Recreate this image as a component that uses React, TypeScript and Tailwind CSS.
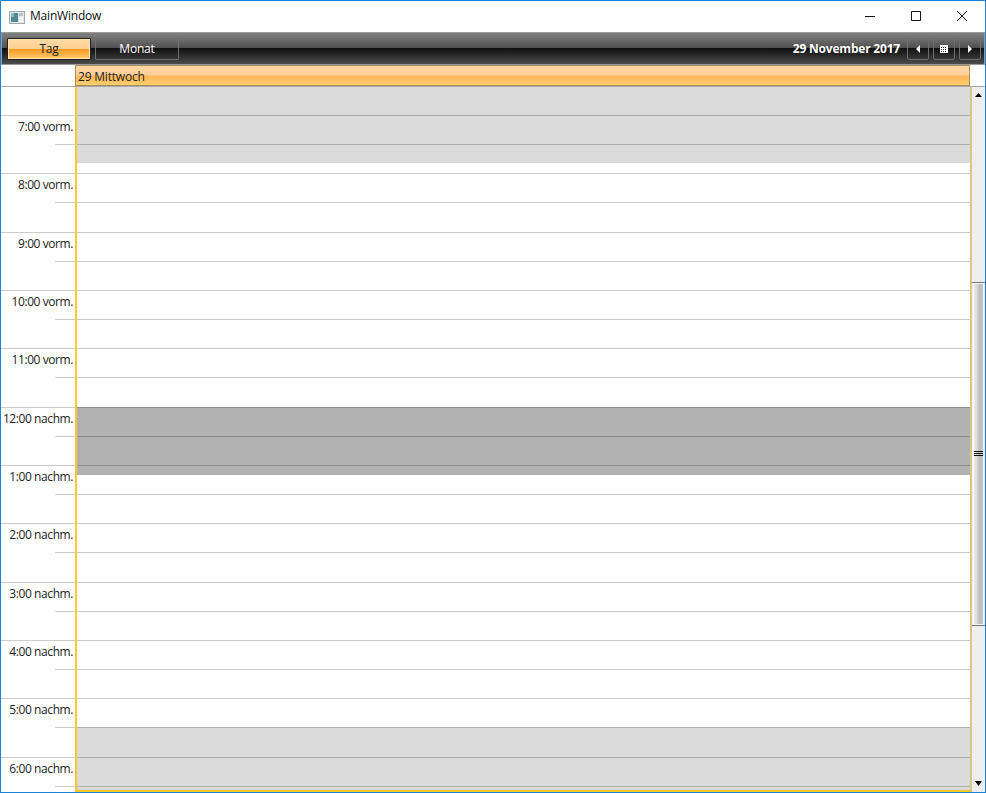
const hours = [
  "7:00 vorm.",
  "8:00 vorm.",
  "9:00 vorm.",
  "10:00 vorm.",
  "11:00 vorm.",
  "12:00 nachm.",
  "1:00 nachm.",
  "2:00 nachm.",
  "3:00 nachm.",
  "4:00 nachm.",
  "5:00 nachm.",
  "6:00 nachm.",
];

function WindowButtons() {
  return (
    <div className="flex h-full items-start">
      <div className="flex h-[30px] w-[46px] items-center justify-center">
        <svg width="10" height="10" viewBox="0 0 10 10"><path d="M0 5.5H10" stroke="#111" /></svg>
      </div>
      <div className="flex h-[30px] w-[46px] items-center justify-center">
        <svg width="10" height="10" viewBox="0 0 10 10"><path d="M.5.5h9v9h-9z" fill="none" stroke="#111" /></svg>
      </div>
      <div className="flex h-[30px] w-[46px] items-center justify-center">
        <svg width="12" height="12" viewBox="0 0 12 12"><path d="M1 1l10 10M11 1L1 11" stroke="#111" /></svg>
      </div>
    </div>
  );
}

function AppIcon() {
  return (
    <svg width="16" height="16" viewBox="0 0 16 16">
      <rect x="0.5" y="2.5" width="15" height="12" fill="#e4e8ea" stroke="#a3aaae" />
      <rect x="2" y="4" width="7" height="9" fill="#4f8a90" />
      <rect x="2" y="4" width="3" height="4" fill="#8fbabd" />
      <rect x="10" y="4" width="4" height="3" fill="#b9c2c7" />
      <rect x="10" y="8" width="4" height="5" fill="#f4f6f7" />
    </svg>
  );
}

function NavButton({ children }: { children: React.ReactNode }) {
  return (
    <div className="flex h-[22px] w-[22px] items-center justify-center rounded-[2px] border border-[#6f6f6f]">
      {children}
    </div>
  );
}

function Toolbar() {
  return (
    <div className="flex h-[33px] shrink-0 items-center justify-between border border-[#999999] bg-[linear-gradient(#808080_0%,#4f4f4f_49%,#101010_50%,#4c4c4c_100%)] pl-[5px] pr-[3px]">
      <div className="flex gap-1">
        <div className="flex h-[22px] w-[84px] items-center justify-center rounded-[1px] border border-[#222] bg-[linear-gradient(#ffdba6_0%,#ffcf92_48%,#ff9b22_52%,#ffcb70_100%)] text-[#222] outline outline-1 -outline-offset-2 outline-[#ffe2b0]">
          Tag
        </div>
        <div className="flex h-[22px] w-[84px] items-center justify-center rounded-[1px] border border-[#6f6f6f] text-white">
          Monat
        </div>
      </div>
      <div className="flex items-center gap-[4px]">
        <span className="mr-[3px] font-bold text-white">29 November 2017</span>
        <NavButton>
          <svg width="4" height="8" viewBox="0 0 4 8"><path d="M4 0v8L0 4z" fill="#fff" /></svg>
        </NavButton>
        <NavButton>
          <svg width="8" height="8" viewBox="0 0 8 8">
            <path d="M0 0h8v8H0z" fill="#fff" />
            <path d="M1 2h1v1H1zM3 2h1v1H3zM5 2h1v1H5zM1 4h1v1H1zM3 4h1v1H3zM5 4h1v1H5zM1 6h1v1H1zM3 6h1v1H3zM5 6h1v1H5z" fill="#333" />
          </svg>
        </NavButton>
        <NavButton>
          <svg width="4" height="8" viewBox="0 0 4 8"><path d="M0 0v8l4-4z" fill="#fff" /></svg>
        </NavButton>
      </div>
    </div>
  );
}

function Gutter() {
  return (
    <div className="w-[74px] shrink-0">
      <div className="h-[28.87px] border-b border-[#cccccc]" />
      {hours.map((label) => (
        <div key={label}>
          <div className="ml-[54px] h-[29.172px] border-b border-[#cccccc]" />
          <div className="-mt-[29.172px] h-[29.172px] whitespace-nowrap pr-[2px] pt-[2px] text-right leading-[17px] tracking-[-0.42px] text-[#222]">
            {label}
          </div>
          <div className="h-[29.172px] border-b border-[#cccccc]" />
        </div>
      ))}
    </div>
  );
}

function DayColumn() {
  return (
    <div className="grid min-w-0 flex-1 border-b-2 border-l-2 border-r border-[#ffc82e]">
      <div className="col-start-1 row-start-1 flex flex-col">
        <div className="h-[76px] bg-[#dbdbdb]" />
        <div className="h-[244px]" />
        <div className="h-[68px] bg-[#b2b2b2]" />
        <div className="h-[252px]" />
        <div className="flex-1 bg-[#dbdbdb]" />
      </div>
      <div className="col-start-1 row-start-1 overflow-hidden">
        <div className="h-[28.87px] border-b border-black/20" />
        {Array.from({ length: 24 }).map((_, i) => (
          <div key={i} className="h-[29.172px] border-b border-black/20" />
        ))}
      </div>
    </div>
  );
}

function ScrollBar() {
  return (
    <div className="flex w-[14px] shrink-0 flex-col border-l border-l-[#c8c8c8] bg-[#eeeeee]">
      <div className="flex h-[16px] items-center justify-center">
        <svg width="7" height="4" viewBox="0 0 7 4"><path d="M3.5 0L7 4H0z" fill="#000" /></svg>
      </div>
      <div className="h-[179px]" />
      <div className="flex h-[344px] items-center justify-center border-y border-y-[#777] bg-[linear-gradient(90deg,#f2f2f2_0%,#dddddd_35%,#bdbdbd_60%,#c6c6c6_85%,#efefef_100%)] pb-[2px] outline outline-1 -outline-offset-2 outline-white/80">
        <svg width="11" height="5" viewBox="0 0 11 5"><path d="M0 .5h11M0 2.5h11M0 4.5h11" stroke="#111" /></svg>
      </div>
      <div className="flex-1" />
      <div className="flex h-[17px] items-center justify-center">
        <svg width="7" height="5" viewBox="0 0 7 5"><path d="M0 0h7L3.5 5z" fill="#000" /></svg>
      </div>
    </div>
  );
}

export default function App() {
  return (
    <div className="flex h-[793px] w-[986px] flex-col overflow-hidden border border-[#1883d7] bg-white font-['Open_Sans',sans-serif] text-[12px] tracking-[-0.2px]">
      <div className="flex h-[31px] shrink-0 items-center justify-between pl-[8px]">
        <div className="flex items-center gap-[5px]">
          <AppIcon />
          <span className="-mt-[2px] text-[#111]">MainWindow</span>
        </div>
        <WindowButtons />
      </div>
      <Toolbar />
      <div className="flex h-[22px] shrink-0 border-b border-[#a8a8a8]">
        <div className="w-[74px] shrink-0" />
        <div className="flex w-[895px] items-center border border-[#a88e5e] bg-[linear-gradient(#ffd9a3_0%,#ffcf95_48%,#ffb75a_52%,#ffcd6c_100%)] pl-[2px] pt-[2px] text-[#222]">
          29 Mittwoch
        </div>
      </div>
      <div className="flex min-h-0 flex-1 overflow-hidden">
        <Gutter />
        <DayColumn />
        <ScrollBar />
      </div>
    </div>
  );
}
